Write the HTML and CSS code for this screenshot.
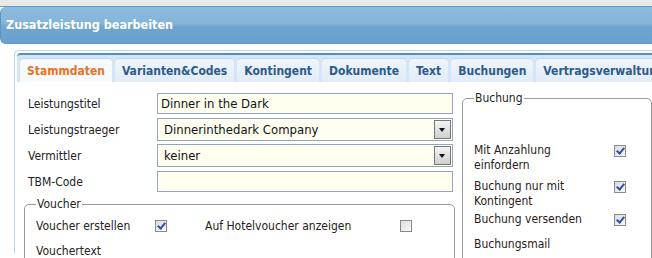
FILE: index.html
```html
<!DOCTYPE html>
<html lang="de">
<head>
  <meta charset="UTF-8">
  <title>Zusatzleistung bearbeiten</title>
  <link rel="stylesheet" href="styles.css">
</head>
<body>

  <div class="topstrip"></div>
  <div class="header">Zusatzleistung bearbeiten</div>

  <div class="panel">
    <div class="tabs">
      <span class="tab active">Stammdaten</span>
      <span class="tab">Varianten&amp;Codes</span>
      <span class="tab">Kontingent</span>
      <span class="tab">Dokumente</span>
      <span class="tab">Text</span>
      <span class="tab">Buchungen</span>
      <span class="tab">Vertragsverwaltung</span>
    </div>

    <div class="content">
      <div class="leftcol">
        <div class="row">
          <label>Leistungstitel</label>
          <div class="field">Dinner in the Dark</div>
        </div>
        <div class="row">
          <label>Leistungstraeger</label>
          <div class="field select">Dinnerinthedark Company<span class="arrow"></span></div>
        </div>
        <div class="row">
          <label>Vermittler</label>
          <div class="field select">keiner<span class="arrow"></span></div>
        </div>
        <div class="row">
          <label>TBM-Code</label>
          <div class="field"></div>
        </div>

        <fieldset class="voucher">
          <legend>Voucher</legend>
          <div class="vrow">
            <span class="vlabel">Voucher erstellen</span>
            <span class="check on"></span>
            <span class="vlabel wide">Auf Hotelvoucher anzeigen</span>
            <span class="check"></span>
          </div>
          <div class="vrow">
            <span class="vlabel">Vouchertext</span>
          </div>
        </fieldset>
      </div>

      <fieldset class="buchung">
        <legend>Buchung</legend>
        <div class="brow first">
          <span class="blabel">Mit Anzahlung einfordern</span>
          <span class="check on"></span>
        </div>
        <div class="brow second">
          <span class="blabel">Buchung nur mit Kontingent</span>
          <span class="check on"></span>
        </div>
        <div class="brow third">
          <span class="blabel">Buchung versenden</span>
          <span class="check on"></span>
        </div>
        <div class="brow">
          <span class="blabel">Buchungsmail</span>
        </div>
      </fieldset>
    </div>
  </div>

</body>
</html>
```

FILE: styles.css
```css
body {
  margin: 0;
  width: 652px;
  height: 258px;
  overflow: hidden;
  background: #fff;
  font-family: "DejaVu Sans Condensed", "DejaVu Sans", sans-serif;
  font-size: 12px;
  color: #222;
}
.topstrip {
  height: 6px;
  background: #e8e8e6;
  border-bottom: 1px solid #5b9ad0;
}
.header {
  height: 36px;
  line-height: 36px;
  padding-left: 5px;
  color: #fff;
  font-weight: bold;
  font-size: 12.5px;
  border-radius: 6px 0 0 6px;
  border-left: 1px solid #5c93c4;
  border-bottom: 1px solid #5f97c7;
  background: linear-gradient(to bottom, #8dbadd 0%, #86b5da 45%, #6fa5d0 55%, #69a1ce 100%);
}
.panel {
  margin: 6px 0 0 14px;
  border-top: 1px solid #b8d2ea;
  border-left: 1px solid #b8d2ea;
  border-top-left-radius: 5px;
  padding: 2px 0 0 2px;
  height: 200px;
}
.tabs {
  display: flex;
  gap: 3px;
  border-top: 2px solid #4f90cc;
  border-top-left-radius: 4px;
  background: #d5e5f5;
  padding: 3px 0 0 3px;
  height: 24px;
  white-space: nowrap;
  overflow: hidden;
}
.tab {
  padding: 0 7px;
  height: 23px;
  line-height: 24px;
  font-weight: bold;
  color: #2d5a8a;
  background: linear-gradient(to bottom, #eef5fc, #e0ecf8);
  border-radius: 4px 4px 0 0;
  border-top: 1px solid #c0d6ec;
}
.tab.active {
  color: #e8731e;
  background: #f7fafd;
}
.content {
  display: flex;
  padding: 11px 0 0 11px;
}
.leftcol {
  width: 427px;
  flex-shrink: 0;
}
.row {
  display: flex;
  align-items: center;
  height: 21px;
  margin-bottom: 5px;
}
.row label {
  width: 129px;
}
.field {
  position: relative;
  width: 291px;
  height: 19px;
  line-height: 19px;
  padding-left: 3px;
  border: 1px solid #8ea6bf;
  background: #fffff0;
  font-size: 13px;
  color: #111;
}
.field.select {
  height: 21px;
  line-height: 21px;
  padding-left: 6px;
  width: 288px;
}
.arrow {
  position: absolute;
  right: 1px;
  top: 1px;
  width: 15px;
  height: 17px;
  border: 1px solid #777;
  background: linear-gradient(to bottom, #f4f4f4, #cfcfcf);
}
.arrow::after {
  content: "";
  position: absolute;
  left: 4px;
  top: 7px;
  border-left: 3px solid transparent;
  border-right: 3px solid transparent;
  border-top: 4px solid #111;
}
fieldset {
  border: 1px solid #999;
  border-radius: 5px;
  margin: 0;
}
legend {
  padding: 0 1px;
}
.voucher {
  margin: 2px 0 0 -4px;
  padding: 2px 10px 0 11px;
}
.vrow {
  display: flex;
  align-items: center;
  height: 25px;
}
.vlabel {
  width: 119px;
}
.vlabel.wide {
  margin-left: 38px;
  width: 195px;
}
.check {
  display: inline-block;
  flex-shrink: 0;
  width: 10px;
  height: 10px;
  border: 1px solid #8a8a8a;
  background: linear-gradient(135deg, #dcdcdc, #f8f8f8);
  position: relative;
}
.check.on::after {
  content: "";
  position: absolute;
  left: 3px;
  top: 0px;
  width: 3px;
  height: 6px;
  border-right: 2px solid #2f4fa8;
  border-bottom: 2px solid #2f4fa8;
  transform: rotate(40deg);
}
.buchung {
  margin: -2px 0 0 7px;
  width: 200px;
  height: 200px;
  padding: 0 0 0 11px;
}
.brow {
  display: flex;
  align-items: flex-start;
  color: #2a1a1a;
}
.brow .check {
  margin-top: 2px;
}
.brow.first {
  margin-top: 38px;
  margin-bottom: 6px;
}
.brow.second {
  margin-bottom: 3px;
}
.brow.third {
  margin-bottom: 10px;
}
.blabel {
  width: 125px;
  margin-right: 15px;
  line-height: 15px;
}
```
